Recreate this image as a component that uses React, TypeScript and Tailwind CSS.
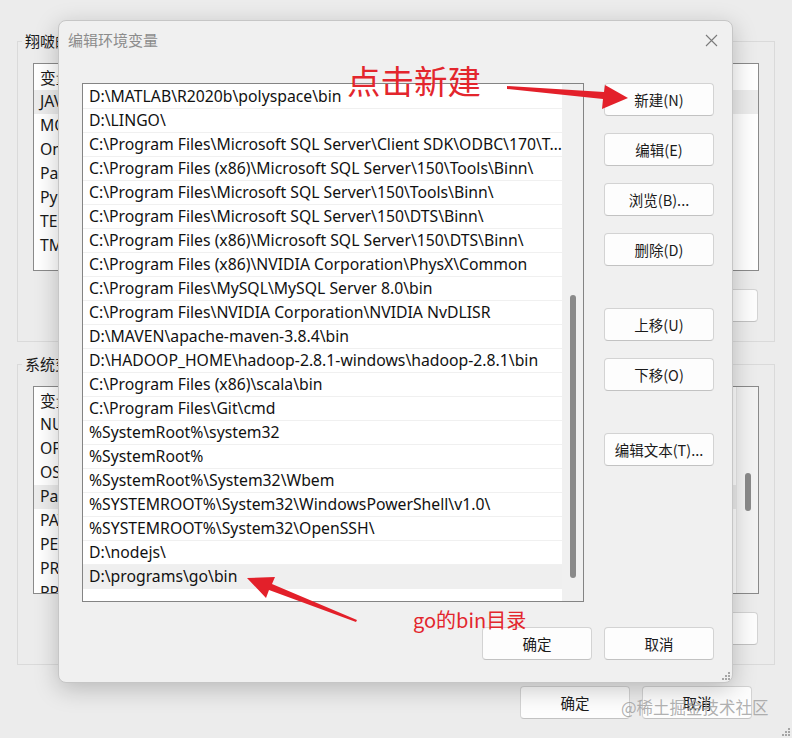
import React from "react";

const FONT = { fontFamily: '"Noto Sans", "Noto Sans CJK SC", sans-serif' };
const CJK = { fontFamily: '"Noto Sans CJK SC", "Noto Sans", sans-serif' };

const paths = [
  "D:\\MATLAB\\R2020b\\polyspace\\bin",
  "D:\\LINGO\\",
  "C:\\Program Files\\Microsoft SQL Server\\Client SDK\\ODBC\\170\\Tools\\Binn\\",
  "C:\\Program Files (x86)\\Microsoft SQL Server\\150\\Tools\\Binn\\",
  "C:\\Program Files\\Microsoft SQL Server\\150\\Tools\\Binn\\",
  "C:\\Program Files\\Microsoft SQL Server\\150\\DTS\\Binn\\",
  "C:\\Program Files (x86)\\Microsoft SQL Server\\150\\DTS\\Binn\\",
  "C:\\Program Files (x86)\\NVIDIA Corporation\\PhysX\\Common",
  "C:\\Program Files\\MySQL\\MySQL Server 8.0\\bin",
  "C:\\Program Files\\NVIDIA Corporation\\NVIDIA NvDLISR",
  "D:\\MAVEN\\apache-maven-3.8.4\\bin",
  "D:\\HADOOP_HOME\\hadoop-2.8.1-windows\\hadoop-2.8.1\\bin",
  "C:\\Program Files (x86)\\scala\\bin",
  "C:\\Program Files\\Git\\cmd",
  "%SystemRoot%\\system32",
  "%SystemRoot%",
  "%SystemRoot%\\System32\\Wbem",
  "%SYSTEMROOT%\\System32\\WindowsPowerShell\\v1.0\\",
  "%SYSTEMROOT%\\System32\\OpenSSH\\",
  "D:\\nodejs\\",
  "D:\\programs\\go\\bin",
];

const userVars = ["JAVA_HOME", "MOZ_PLUGIN_PATH", "OneDrive", "Path", "PyCharm", "TEMP", "TMP"];
const sysVars = ["NUMBER_OF_PROCESSORS", "OFFICE_HOME", "OS", "Path", "PATHEXT", "PERL_HOME", "PROCESSOR_ARCHITECTURE", "PROCESSOR_IDENTIFIER"];

function Btn({ children, className = "" }: { children: React.ReactNode; className?: string }) {
  return (
    <div
      className={
        "flex h-[33px] w-[110px] shrink-0 items-center justify-center rounded-[4px] border border-[#d3d3d3] border-b-[#c2c2c2] bg-[#fdfdfd] text-[14.5px] text-[#1a1a1a] " +
        className
      }
      style={CJK}
    >
      {children}
    </div>
  );
}

function Grip() {
  return (
    <svg width="10" height="10" viewBox="0 0 10 10">
      {[
        [8, 0],
        [5, 3],
        [8, 3],
        [2, 6],
        [5, 6],
        [8, 6],
      ].map(([x, y]) => (
        <rect key={`${x}-${y}`} x={x} y={y + 2} width="2" height="2" fill="#a6a6a6" />
      ))}
    </svg>
  );
}

function BgGroup({
  label,
  rows,
  selected,
  scroll,
}: {
  label: string;
  rows: string[];
  selected: number;
  scroll?: boolean;
}) {
  return (
    <div className="h-[301px] border border-[#dadada] px-[15px]">
      <div className="-mt-[11px] -ml-[11px] w-fit bg-[#ececec] px-[3px] text-[15px] leading-[20px] text-[#1a1a1a]" style={CJK}>
        {label}
      </div>
      <div className="mt-[12px] flex h-[208px] overflow-hidden border border-[#8a8a8a] bg-white">
        <div className="flex-1 pt-[2px] text-[15.75px] text-[#1a1a1a]">
          <div className="flex h-[24px] items-center px-[6px]" style={CJK}>
            变量
          </div>
          {rows.map((r, i) => (
            <div
              key={r}
              className={"flex h-[24px] items-center px-[6px] " + (i === selected ? "bg-[#ececec]" : "")}
            >
              {r}
            </div>
          ))}
        </div>
        {scroll && (
          <div className="flex w-[22px] justify-center border-l border-[#e8e8e8] bg-[#f3f3f3] pt-[86px]">
            <div className="h-[38px] w-[6px] rounded-[3px] bg-[#8a8a8a]" />
          </div>
        )}
      </div>
      <div className="mt-[18px] flex justify-end gap-[12px] pr-[1px]">
        <Btn>新建(N)...</Btn>
        <Btn>编辑(I)...</Btn>
        <Btn>删除(L)</Btn>
      </div>
    </div>
  );
}

export default function App() {
  return (
    <div className="relative h-[738px] w-[792px] overflow-hidden bg-[#ececec]" style={FONT}>
      {/* background window: 环境变量 */}
      <div className="px-[17px] pt-[41px]">
        <BgGroup label="翔啵的用户变量(U)" rows={userVars} selected={0} />
        <div className="mt-[22px]">
          <BgGroup label="系统变量(S)" rows={sysVars} selected={3} scroll />
        </div>
      </div>
      <div className="mt-[21px] flex justify-end gap-[12px] pr-[40px]">
        <Btn>确定</Btn>
        <Btn>取消</Btn>
      </div>
      <div className="absolute bottom-[2px] right-[2px]">
        <Grip />
      </div>

      {/* front dialog: 编辑环境变量 */}
      <div className="absolute left-[58px] top-[20px] flex h-[663px] w-[675px] flex-col rounded-[8px] border border-[#c6c6c6] bg-[#f0f0f0] shadow-[0_6px_24px_rgba(0,0,0,0.22)]">
        <div className="flex h-[37px] items-center justify-between pl-[9px] pr-[14px] pt-[2px]">
          <span className="text-[15px] text-[#8c8c8c]" style={CJK}>
            编辑环境变量
          </span>
          <svg width="13" height="13" viewBox="0 0 13 13">
            <path d="M1 1 L12 12 M12 1 L1 12" stroke="#7a7a7a" strokeWidth="1.1" />
          </svg>
        </div>
        <div className="mt-[25px] flex gap-[20px] pl-[23px]">
          <div className="flex h-[519px] w-[502px] border border-[#848484] bg-white">
            <div className="w-[479px] pt-[1px]">
              {paths.map((p, i) => (
                <div
                  key={p}
                  className={
                    "h-[24px] truncate border-b border-[#f0f0f0] pl-[6px] text-[15.75px] leading-[23px] text-[#111] " +
                    (i === paths.length - 1 ? "border-b-0 bg-[#efefef]" : "")
                  }
                >
                  {p}
                </div>
              ))}
            </div>
            <div className="flex w-[21px] flex-col items-center bg-[#f0f0f0] pt-[211px]">
              <div className="h-[283px] w-[6px] rounded-[3px] bg-[#8a8a8a]" />
            </div>
          </div>
          <div className="flex flex-col">
            <Btn>新建(N)</Btn>
            <Btn className="mt-[17px]">编辑(E)</Btn>
            <Btn className="mt-[17px]">浏览(B)...</Btn>
            <Btn className="mt-[17px]">删除(D)</Btn>
            <Btn className="mt-[42px]">上移(U)</Btn>
            <Btn className="mt-[17px]">下移(O)</Btn>
            <Btn className="mt-[42px]">编辑文本(T)...</Btn>
          </div>
        </div>
        <div className="mt-[25px] flex justify-end gap-[12px] pr-[18px]">
          <Btn>确定</Btn>
          <Btn>取消</Btn>
        </div>
        <div className="absolute bottom-[2px] right-[2px]">
          <Grip />
        </div>
      </div>

      {/* annotations */}
      <svg className="pointer-events-none absolute left-0 top-0" width="792" height="738" viewBox="0 0 792 738">
        <polygon points="507,86 604,92 605,85 628,98 602,109 603,99 507,89" fill="#e3202a" />
        <polygon points="357,620 272,584 275,577 247,578 266,598 269,590 356,622" fill="#e3202a" />
      </svg>
      <div className="absolute left-[347px] top-[61px] text-[33.5px] leading-[38px] text-[#e3262d]" style={CJK}>
        点击新建
      </div>
      <div className="absolute left-[413px] top-[607px] text-[20px] leading-[26px] text-[#e3262d]" style={CJK}>
        go的bin目录
      </div>
      <div className="absolute left-[621px] top-[695px] text-[16.5px] leading-[24px] text-[#9c9c9c]/80" style={CJK}>
        @稀土掘金技术社区
      </div>
    </div>
  );
}
